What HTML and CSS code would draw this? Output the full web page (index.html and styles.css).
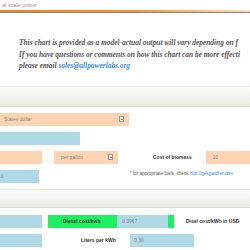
FILE: index.html
```html
<!DOCTYPE html>
<html lang="en">
<head>
    <meta charset="UTF-8">
    <meta name="viewport" content="width=device-width, initial-scale=1.0">
    <title>Diesel cost calculator</title>
    <link rel="stylesheet" href="styles.css">
</head>
<body>
    <header class="header">
        <p class="tagline">al scale power</p>
        <div class="rule"></div>
    </header>

    <section class="note">
        <p>This chart is provided as a model-actual output will vary depending on f</p>
        <p>If you have questions or comments on how this chart can be more effecti</p>
        <p>please email <a href="#">sales@allpowerlabs.org</a></p>
    </section>

    <div class="band"></div>

    <form class="calc">
        <div class="row">
            <div class="field peach wide select"><span>States dollar</span><i class="arrow"></i></div>
        </div>
        <div class="row">
            <div class="field blue mid"></div>
        </div>
        <div class="row">
            <div class="field peach short"></div>
            <div class="field peach unit select"><span>per gallon</span><i class="arrow"></i></div>
            <label class="label biomass">Cost of biomass</label>
            <div class="field peach cost"><span>.10</span></div>
        </div>
        <div class="row">
            <div class="field blue tiny"><span>0</span></div>
            <p class="hint">* for appropriate fuels, check <a href="#">http://gekgasifier.com</a></p>
        </div>
    </form>

    <div class="band second"></div>

    <div class="calc results">
        <div class="row">
            <div class="field blue short"></div>
            <div class="green">
                <label class="label">Diesel cost/kwh</label>
                <div class="field blue result"><span>0.3967</span></div>
            </div>
            <label class="label usd">Disel cost/kWh in USD</label>
        </div>
        <div class="row">
            <div class="field blue short"></div>
            <label class="label liters">Liters per kWh</label>
            <div class="field blue liters-in"><span>0.30</span></div>
        </div>
    </div>
</body>
</html>
```

FILE: styles.css
```css
html{
    box-sizing: border-box;
    font-family: "Liberation Sans", Arial, sans-serif;
    font-size: 16px;
}
*,
*::before,
*::after{
    box-sizing: inherit;
}
body{
    margin: 0;
    width: 250px;
    height: 250px;
    overflow: hidden;
    background: #fff;
}
p{
    margin: 0;
}
a{
    color: #3d8ede;
    text-decoration: none;
}

/* cabecera */
.header{
    height: 14px;
    padding-top: 1.5px;
}
.tagline{
    font-size: 5.5px;
    line-height: 7px;
    color: #999;
    padding-left: 2px;
    height: 8px;
}
.rule{
    height: 3px;
    background: linear-gradient(90deg, #f5821f 0%, #f8952f 55%, #fde0c2 100%);
    border-bottom: 1px solid #8a8a80;
}

/* texto */
.note{
    padding: 23px 0 0 19px;
    font-family: "Liberation Serif", Georgia, serif;
    font-style: italic;
    font-weight: bold;
    font-size: 7.4px;
    line-height: 11.5px;
    color: #555;
    white-space: nowrap;
}
.band{
    margin-top: 14px;
    height: 21px;
    border-top: 1px solid #ecebe2;
    background: linear-gradient(180deg, #fcfcfa 0%, #e9e9e3 100%);
    border-bottom: 1px solid #dedcd2;
}
.band.second{
    margin-top: 6px;
    height: 19px;
}

/* formulario */
.calc{
    margin-top: 6px;
}
.results{
    margin-top: 7px;
}
.row{
    display: flex;
    align-items: center;
    height: 13px;
    margin-bottom: 6px;
    white-space: nowrap;
}
.field{
    flex-shrink: 0;
    height: 13px;
    font-size: 5px;
    color: #888;
    display: flex;
    align-items: center;
    padding-left: 4px;
    position: relative;
}
.peach{
    background: #fdd4b2;
}
.blue{
    background: #b0d9e6;
}
.wide{ width: 129px; }
.mid{ width: 80px; }
.short{ width: 42px; }
.tiny{ width: 39px; padding-left: 0.5px; }
.unit{ width: 64px; margin-left: 12px; padding-left: 7px; }
.cost{ width: 50px; padding-left: 5px; }
.select .arrow{
    position: absolute;
    right: 5px;
    top: 3.5px;
    width: 5px;
    height: 6px;
    background: #f3f3f3;
    border: 1px solid #999;
}
.select .arrow::after{
    content: "";
    position: absolute;
    left: 0.5px;
    top: 2px;
    border-left: 1.5px solid transparent;
    border-right: 1.5px solid transparent;
    border-top: 1.5px solid #222;
}
.label{
    flex-shrink: 0;
    font-size: 5px;
    font-weight: bold;
    color: #333;
}
.biomass{ margin-left: 35px; width: 53px; }
.hint{
    font-size: 4.6px;
    color: #555;
    margin-left: 91px;
    margin-top: -6px;
}
.green{
    flex-shrink: 0;
    display: flex;
    align-items: center;
    height: 13px;
    width: 126px;
    margin-left: 6px;
    background: #1ef064;
    padding-left: 15px;
}
.green .label{
    width: 54px;
}
.result{
    width: 51px;
    padding-left: 5px;
}
.usd{ margin-left: 12px; }
.liters{ margin-left: 39px; width: 49px; }
.liters-in{ width: 64px; padding-left: 4px; }
```
